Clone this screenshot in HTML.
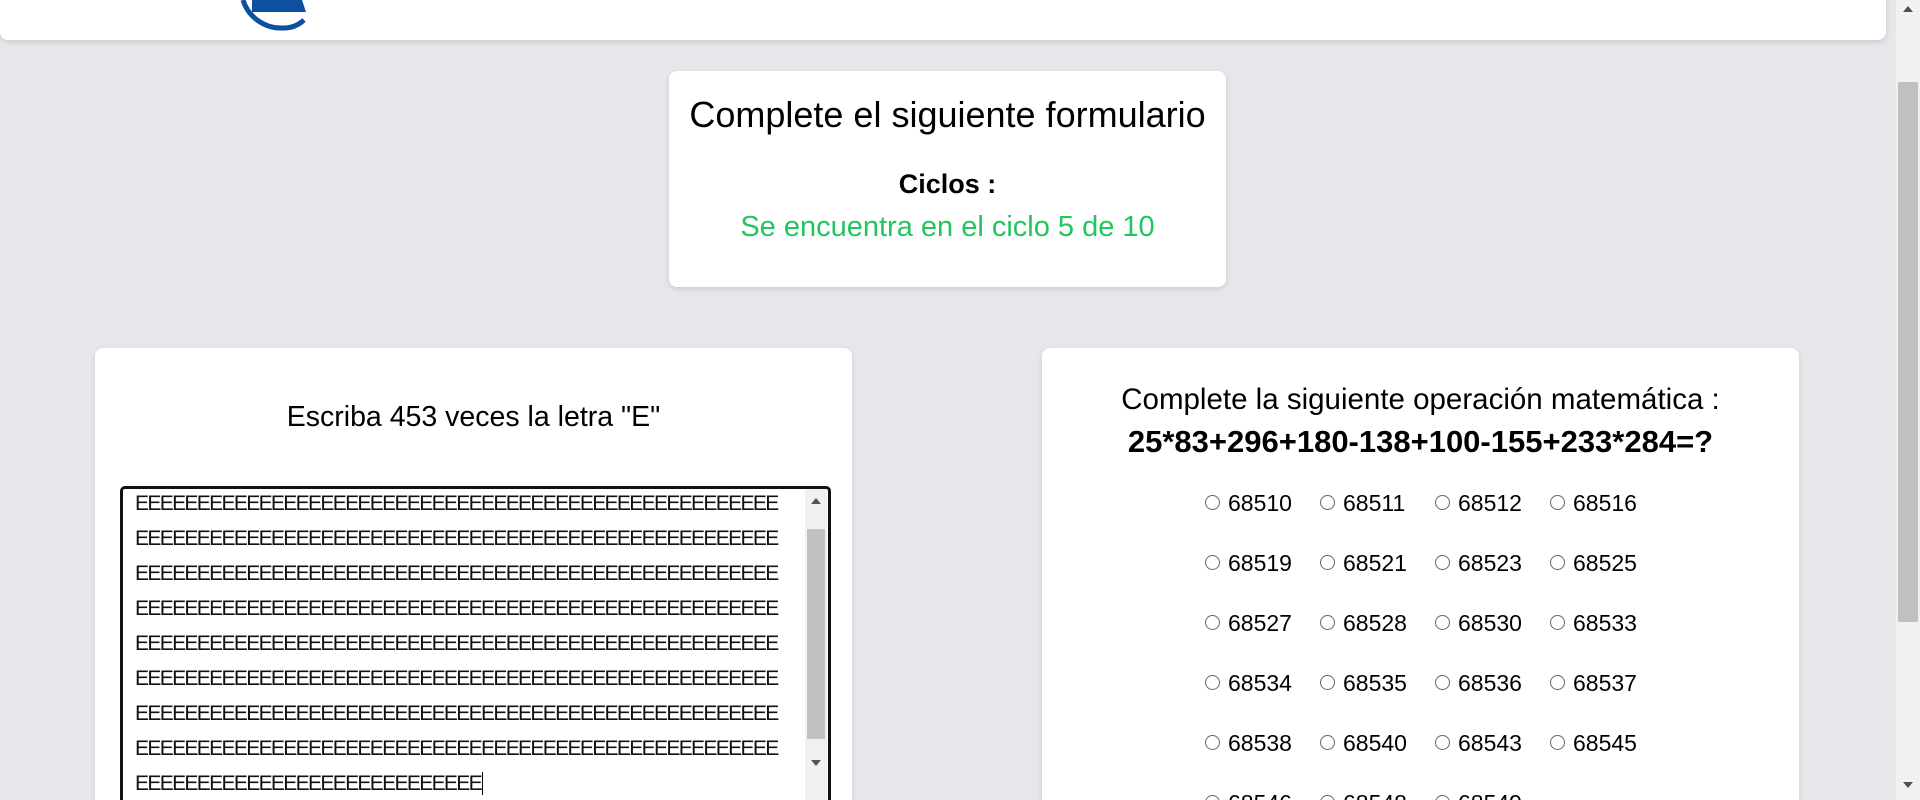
<!DOCTYPE html>
<html style="width:1920px;height:800px;overflow:hidden"><head><meta charset="utf-8"><style>
*{box-sizing:border-box;margin:0;padding:0}
body{width:1920px;height:800px;overflow:hidden;background:#e5e7eb;font-family:"Liberation Sans",sans-serif;color:#000;position:relative}
.abs{position:absolute}
.card{position:absolute;background:#fff;border-radius:8px;box-shadow:0 2px 6px rgba(0,0,0,.12)}
.c{text-align:center;white-space:nowrap}
.ta{position:absolute;left:120px;top:486px;width:711px;height:330px;border:3px solid #111;border-bottom:none;border-radius:5px 5px 0 0;background:#fff;overflow:hidden}
.ln{position:absolute;left:12px;font-size:21px;letter-spacing:-1.65px;line-height:35px;white-space:nowrap;color:#111}
.r{position:absolute;font-size:23px;white-space:nowrap;line-height:26px}
.r i{display:inline-block;width:15px;height:15px;border:1px solid #666;border-radius:50%;margin-right:8px;vertical-align:1px}
</style></head><body>
<div class="card" style="left:0;top:-10px;width:1886px;height:50px;border-radius:0 0 8px 8px"></div>
<svg class="abs" style="left:238px;top:0" width="90" height="32" viewBox="0 0 90 32">
<path d="M5 0 A40 40 0 0 0 45 28 A30 30 0 0 0 66 20" fill="none" stroke="#0d4fa0" stroke-width="5"/>
<path d="M14 0 H64 L68 12 H14 Z" fill="#0d4fa0"/>
</svg>
<div class="card" style="left:669px;top:71px;width:557px;height:216px">
<div class="c" style="position:absolute;left:0;right:0;top:23px;font-size:36px;line-height:42px">Complete el siguiente formulario</div>
<div class="c" style="position:absolute;left:0;right:0;top:97px;font-size:27px;font-weight:bold;line-height:32px">Ciclos :</div>
<div class="c" style="position:absolute;left:0;right:0;top:140px;font-size:29px;color:#22c55e;line-height:32px">Se encuentra en el ciclo 5 de 10</div>
</div>
<div class="card" style="left:95px;top:348px;width:757px;height:460px">
<div class="c" style="position:absolute;left:0;right:0;top:53px;font-size:28.5px;line-height:32px">Escriba 453 veces la letra "E"</div>
</div>
<div class="ta">
<div class="ln" style="top:-3px">EEEEEEEEEEEEEEEEEEEEEEEEEEEEEEEEEEEEEEEEEEEEEEEEEEEE</div>
<div class="ln" style="top:32px">EEEEEEEEEEEEEEEEEEEEEEEEEEEEEEEEEEEEEEEEEEEEEEEEEEEE</div>
<div class="ln" style="top:67px">EEEEEEEEEEEEEEEEEEEEEEEEEEEEEEEEEEEEEEEEEEEEEEEEEEEE</div>
<div class="ln" style="top:102px">EEEEEEEEEEEEEEEEEEEEEEEEEEEEEEEEEEEEEEEEEEEEEEEEEEEE</div>
<div class="ln" style="top:137px">EEEEEEEEEEEEEEEEEEEEEEEEEEEEEEEEEEEEEEEEEEEEEEEEEEEE</div>
<div class="ln" style="top:172px">EEEEEEEEEEEEEEEEEEEEEEEEEEEEEEEEEEEEEEEEEEEEEEEEEEEE</div>
<div class="ln" style="top:207px">EEEEEEEEEEEEEEEEEEEEEEEEEEEEEEEEEEEEEEEEEEEEEEEEEEEE</div>
<div class="ln" style="top:242px">EEEEEEEEEEEEEEEEEEEEEEEEEEEEEEEEEEEEEEEEEEEEEEEEEEEE</div>
<div class="ln" style="top:277px">EEEEEEEEEEEEEEEEEEEEEEEEEEEE<span style="border-left:1px solid #000;margin-left:1px"></span></div>
<div class="abs" style="left:682px;top:0;width:22px;height:330px;background:#f1f1f1"></div>
<div class="abs" style="left:684px;top:40px;width:18px;height:210px;background:#c1c1c1"></div>
<div class="abs" style="left:688px;top:9px;width:0;height:0;border-left:5px solid transparent;border-right:5px solid transparent;border-bottom:6px solid #555"></div>
<div class="abs" style="left:688px;top:271px;width:0;height:0;border-left:5px solid transparent;border-right:5px solid transparent;border-top:6px solid #555"></div>
</div>
<div class="card" style="left:1042px;top:348px;width:757px;height:460px">
<div class="c" style="position:absolute;left:0;right:0;top:35px;font-size:29.5px;line-height:34px">Complete la siguiente operación matemática :</div>
<div class="c" style="position:absolute;left:0;right:0;top:77px;font-size:31px;font-weight:bold;line-height:34px">25*83+296+180-138+100-155+233*284=?</div>
</div>
<div class="r" style="left:1205px;top:490px"><i></i>68510</div>
<div class="r" style="left:1320px;top:490px"><i></i>68511</div>
<div class="r" style="left:1435px;top:490px"><i></i>68512</div>
<div class="r" style="left:1550px;top:490px"><i></i>68516</div>
<div class="r" style="left:1205px;top:550px"><i></i>68519</div>
<div class="r" style="left:1320px;top:550px"><i></i>68521</div>
<div class="r" style="left:1435px;top:550px"><i></i>68523</div>
<div class="r" style="left:1550px;top:550px"><i></i>68525</div>
<div class="r" style="left:1205px;top:610px"><i></i>68527</div>
<div class="r" style="left:1320px;top:610px"><i></i>68528</div>
<div class="r" style="left:1435px;top:610px"><i></i>68530</div>
<div class="r" style="left:1550px;top:610px"><i></i>68533</div>
<div class="r" style="left:1205px;top:670px"><i></i>68534</div>
<div class="r" style="left:1320px;top:670px"><i></i>68535</div>
<div class="r" style="left:1435px;top:670px"><i></i>68536</div>
<div class="r" style="left:1550px;top:670px"><i></i>68537</div>
<div class="r" style="left:1205px;top:730px"><i></i>68538</div>
<div class="r" style="left:1320px;top:730px"><i></i>68540</div>
<div class="r" style="left:1435px;top:730px"><i></i>68543</div>
<div class="r" style="left:1550px;top:730px"><i></i>68545</div>
<div class="r" style="left:1205px;top:790px"><i></i>68546</div>
<div class="r" style="left:1320px;top:790px"><i></i>68548</div>
<div class="r" style="left:1435px;top:790px"><i></i>68549</div>
<div class="abs" style="left:1896px;top:0;width:24px;height:800px;background:#f1f1f1"></div>
<div class="abs" style="left:1898px;top:82px;width:20px;height:540px;background:#c1c1c1"></div>
<div class="abs" style="left:1903px;top:6px;width:0;height:0;border-left:5px solid transparent;border-right:5px solid transparent;border-bottom:6px solid #505050"></div>
<div class="abs" style="left:1903px;top:782px;width:0;height:0;border-left:5px solid transparent;border-right:5px solid transparent;border-top:6px solid #505050"></div>
</body></html>
